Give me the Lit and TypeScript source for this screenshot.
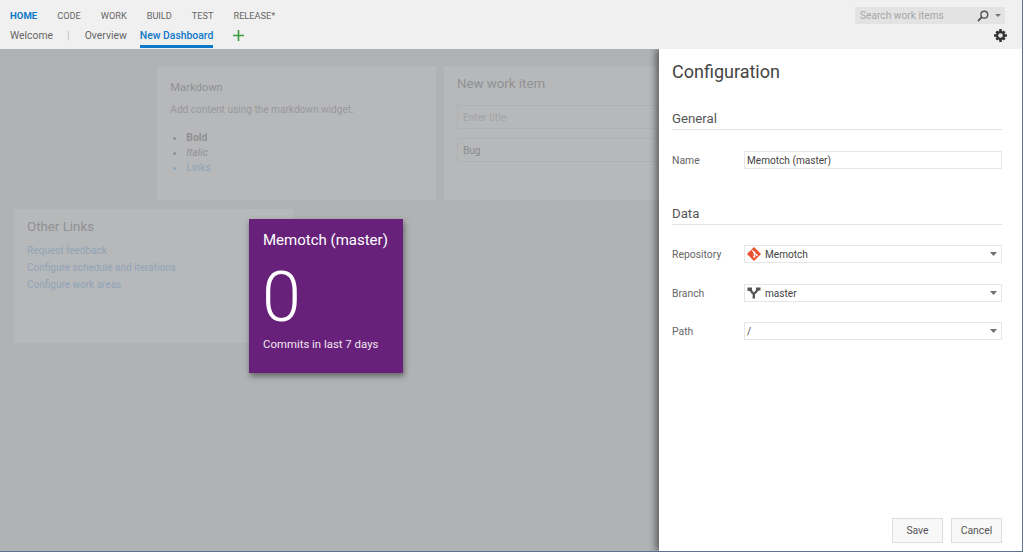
import { LitElement, html, css, svg } from "lit";
import { customElement } from "lit/decorators.js";

const caret = svg`<svg width="7" height="4" viewBox="0 0 7 4"><path d="M0 0h7L3.500 4z" fill="#707070"/></svg>`;

@customElement("app-root")
export class AppRoot extends LitElement {
  static styles = css`
    :host { display: block; width: 1024px; height: 553px; background: #fff; overflow: hidden; position: relative;
      font-family: Roboto, "Open Sans", sans-serif; font-size: 10.4px; color: #444; }
    .frame { box-sizing: border-box; width: 1023px; height: 552px; border-right: 1.5px solid #5d7193; border-bottom: 1.5px solid #5d7193;
      display: flex; flex-direction: column; overflow: hidden; }
    header { height: 49px; flex: none; background: #f0f0f0; display: flex; justify-content: space-between; position: relative; z-index: 1; }
    .navs { display: flex; flex-direction: column; }
    .top { display: flex; gap: 20px; padding: 8px 0 0 10px; height: 17px; font-size: 9.2px; color: #666; line-height: 15px; }
    .top .on { color: #0f78c8; font-weight: 700; font-size: 9.6px; }
    .sub { display: flex; align-items: flex-start; padding: 3px 0 0 10px; font-size: 10.4px; color: #666; line-height: 16px; }
    .sep { margin: 0 15px 0 14px; color: #bbb; }
    .ov { margin-right: 13px; }
    .tab { box-sizing: border-box; color: #0f78c8; font-weight: 500; height: 20px; border-bottom: 3px solid #0f78c8; }
    .plus { margin: 2px 0 0 20px; }
    .tools { display: flex; flex-direction: column; align-items: flex-end; padding: 7px 17px 0 0; }
    .search { box-sizing: border-box; width: 150px; height: 17px; background: #e3e3e3; display: flex; align-items: center; padding: 0 4px 0 5px; gap: 6px;
      font-size: 10.2px; color: #a6a6a6; }
    .search span { flex: 1; }
    .gear { margin: 5px -2px 0 0; }
    main { flex: 1; display: flex; min-height: 0; }
    .canvas { flex: 1; min-width: 0; background: #b1b2b4; overflow: hidden; box-sizing: border-box; padding: 17px 0 0 14px;
      display: grid; grid-template-columns: repeat(5, 135.3px); grid-auto-rows: 135px; gap: 8px; color: #909193; }
    .card { background: #b7b8ba; padding: 13px 13px 0; box-sizing: border-box; height: 134px; }
    .md { grid-column: 2 / span 2; grid-row: 1; }
    .nw { grid-column: 4 / span 2; grid-row: 1; padding: 8px 13px 0; margin-right: -4px; }
    .ol { grid-column: 1 / span 2; grid-row: 2; padding-top: 8px; }
    h3 { margin: 0; font-weight: 400; font-size: 11.2px; line-height: 17px; color: #909193; }
    .nw h3, .ol h3 { font-size: 13.3px; line-height: 19px; }
    .md p { margin: 6px 0 13px; line-height: 15px; font-size: 10.1px; color: #98999b; }
    ul { margin: 0; padding: 0 0 0 16px; line-height: 15px; font-size: 10.4px; }
    li b { font-weight: 700; }
    .lnk { color: #8fa4b8; }
    .inp { border: 1px solid #b0b1b3; height: 24px; box-sizing: border-box; margin-top: 12px; padding: 1px 5px 0; line-height: 22px; font-size: 10.2px; color: #a3a4a6; width: 300px; }
    .inp + .inp { margin-top: 9px; color: #8a8b8d; }
    .ol a { display: block; line-height: 17px; font-size: 10px; color: #8fa4b8; }
    .ol h3 { margin-bottom: 6px; }
    .panel { width: 363px; flex: none; background: #fff; box-shadow: -3px 0 7px rgba(0,0,0,.5); position: relative; box-sizing: border-box; padding: 11px 20px 0 13px;
      display: flex; flex-direction: column; }
    h1 { margin: 0; font-weight: 400; font-size: 18px; line-height: 24px; color: #444; }
    h2 { margin: 0; font-weight: 400; font-size: 13.2px; line-height: 18px; color: #555; padding-bottom: 1px; border-bottom: 1px solid #e2e2e2; }
    .g1 { margin-top: 26px; }
    .g2 { margin-top: 36px; }
    .row { display: flex; align-items: center; height: 18px; }
    .row label { width: 72px; flex: none; color: #666; font-size: 10.4px; }
    .f { flex: 1; box-sizing: border-box; height: 18px; border: 1px solid #e6e6e6; display: flex; align-items: center; gap: 4px; padding: 0 4px 0 2px; font-size: 10.1px; color: #444; }
    .f span { flex: 1; }
    .r1 { margin-top: 21px; }
    .r2 { margin-top: 20px; }
    .r3 { margin-top: 21px; }
    .r4 { margin-top: 20px; }
    .actions { margin-top: auto; padding-bottom: 8px; display: flex; justify-content: flex-end; gap: 8px; }
    button { width: 51px; height: 25px; border: 1px solid #ddd; background: #f8f8f8; font: inherit; font-size: 10.4px; color: #555; padding: 0; }
    .tile { position: absolute; left: 249px; top: 219px; width: 154px; height: 154px; box-sizing: border-box; background: #68217a; color: #fff;
      box-shadow: 1px 3px 6px rgba(0,0,0,.45); padding: 11px 14px 0; z-index: 2; }
    .t1 { font-size: 15px; line-height: 20px; white-space: nowrap; }
    .t2 { font-weight: 300; font-size: 70px; line-height: 60px; margin-top: 17px; margin-left: -1px; }
    .t3 { font-size: 11.4px; line-height: 15px; margin-top: 10px; white-space: nowrap; color: #f0e6f2; }
  `;

  render() {
    return html`<div class="frame">
      <header>
        <div class="navs">
          <div class="top"><span class="on">HOME</span><span>CODE</span><span>WORK</span><span>BUILD</span><span>TEST</span><span>RELEASE*</span></div>
          <div class="sub">
            <span>Welcome</span><span class="sep">|</span><span class="ov">Overview</span><span class="tab">New Dashboard</span>
            <svg class="plus" width="11" height="11" viewBox="0 0 11 11"><path d="M5.500 0v11M0 5.500h11" stroke="#3c9a3c" stroke-width="1.600"/></svg>
          </div>
        </div>
        <div class="tools">
          <div class="search"><span>Search work items</span>
            <svg width="12" height="12" viewBox="0 0 12 12"><circle cx="7.300" cy="4.700" r="3.400" fill="none" stroke="#555" stroke-width="1.400"/><path d="M4.800 7.200 1 11" stroke="#555" stroke-width="1.800"/></svg>
            <svg width="6" height="3" viewBox="0 0 6 3"><path d="M0 0h6L3 3z" fill="#777"/></svg>
          </div>
          <svg class="gear" width="13" height="13" viewBox="0 0 13 13"><g fill="#333"><circle cx="6.500" cy="6.500" r="4.600"/><path d="M5.200 0h2.600v13H5.200zM0 5.200h13v2.600H0z"/><path d="M1.400 3.200 3.200 1.400 11.600 9.800 9.800 11.600zM9.800 1.400l1.800 1.800-8.400 8.400-1.800-1.800z"/></g><circle cx="6.500" cy="6.500" r="2.300" fill="#e8e8e8"/></svg>
        </div>
      </header>
      <main>
        <div class="canvas">
          <div class="card md"><h3>Markdown</h3><p>Add content using the markdown widget.</p>
            <ul><li><b>Bold</b></li><li><i>Italic</i></li><li class="lnk">Links</li></ul></div>
          <div class="card nw"><h3>New work item</h3><div class="inp">Enter title</div><div class="inp">Bug</div></div>
          <div class="card ol"><h3>Other Links</h3><a>Request feedback</a><a>Configure schedule and iterations</a><a>Configure work areas</a></div>
        </div>
        <div class="panel">
          <h1>Configuration</h1>
          <h2 class="g1">General</h2>
          <div class="row r1"><label>Name</label><div class="f"><span>Memotch (master)</span></div></div>
          <h2 class="g2">Data</h2>
          <div class="row r2"><label>Repository</label><div class="f">
            <svg width="14" height="14" viewBox="0 0 13 13"><path d="M6.500 0 13 6.500 6.500 13 0 6.500z" fill="#e8502f"/><path d="M4.500 2.800 6.800 5.100v4M6.800 5.300 9 7.500" stroke="#fff" stroke-width="1" fill="none"/><circle cx="6.800" cy="5.200" r="1" fill="#fff"/><circle cx="6.800" cy="9" r="1" fill="#fff"/><circle cx="9" cy="7.500" r="1" fill="#fff"/></svg>
            <span>Memotch</span>${caret}</div></div>
          <div class="row r3"><label>Branch</label><div class="f">
            <svg width="14" height="12" viewBox="0 0 13 12"><path d="M2.500 2.500 5.500 6.500M10.500 2.500 7 6.500" stroke="#555" stroke-width="2.200" fill="none"/><path d="M6.300 6v5.500" stroke="#555" stroke-width="2.400"/><rect x="0" y="0.500" width="4.500" height="3.500" fill="#555"/><rect x="8.500" y="0.500" width="4.500" height="3" fill="#555"/></svg>
            <span>master</span>${caret}</div></div>
          <div class="row r4"><label>Path</label><div class="f"><span>/</span>${caret}</div></div>
          <div class="actions"><button>Save</button><button>Cancel</button></div>
        </div>
      </main>
      <div class="tile"><div class="t1">Memotch (master)</div><div class="t2">0</div><div class="t3">Commits in last 7 days</div></div>
    </div>`;
  }
}
